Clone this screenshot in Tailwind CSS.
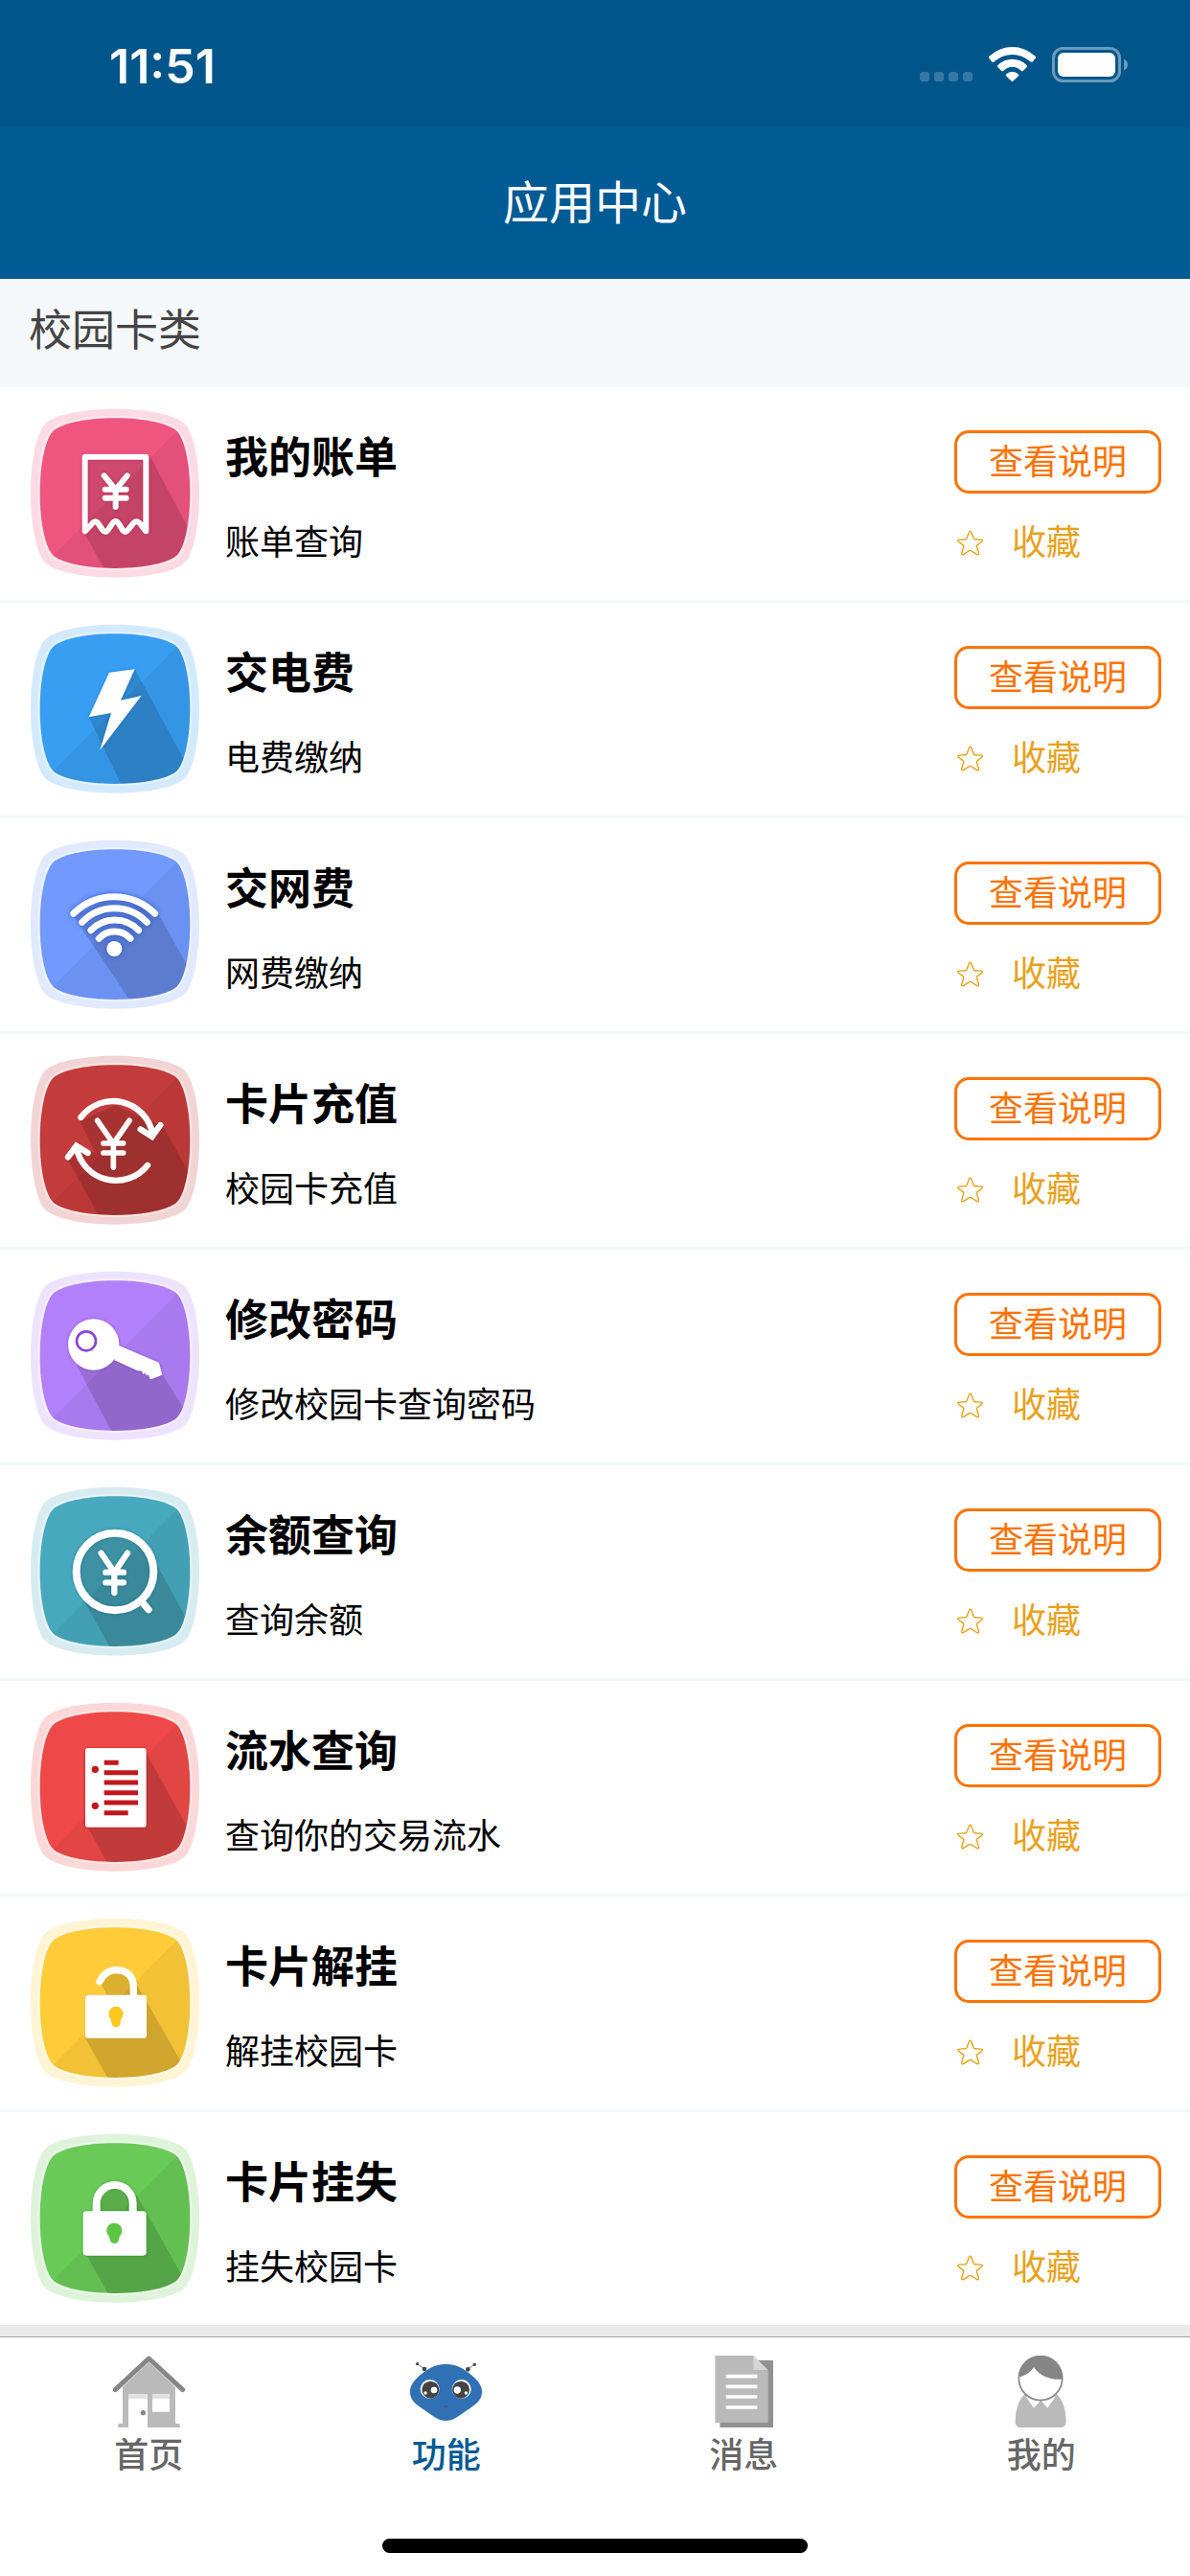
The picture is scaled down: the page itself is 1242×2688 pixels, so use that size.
<!DOCTYPE html>
<html lang="zh-CN">
<head>
    <meta charset="UTF-8">
    <meta name="viewport" content="width=device-width,initial-scale=1">
    <title>应用中心</title>
    <script src="https://cdn.jsdelivr.net/npm/@tailwindcss/browser@4"></script>
</head>
<body class="bg-[#eaeaea] min-h-screen flex flex-col font-['Inter','Noto_Sans_CJK_SC',sans-serif] text-black">
    <!-- 公用图形 -->
    <svg class="absolute w-0 h-0" aria-hidden="true">
        <defs>
            <path id="squircle" d="M0 -264C110 -264 193 -243 218 -218C243 -193 264 -110 264 0C264 110 243 193 218 218C193 243 110 264 0 264C-110 264 -193 243 -218 218C-243 193 -264 110 -264 0C-264 -110 -243 -193 -218 -218C-193 -243 -110 -264 0 -264Z"/>
            <clipPath id="inner"><use href="#squircle" transform="translate(270 269) scale(.89)"/></clipPath>
            <g id="tile">
                <use href="#squircle" transform="translate(270 269)" opacity=".22"/>
                <use href="#squircle" transform="translate(270 269) scale(.9)" fill="none" stroke="#fff" stroke-opacity=".4" stroke-width="9"/>
                <use href="#squircle" transform="translate(270 269) scale(.89)"/>
                <path d="M0 540L540 -2V540Z" fill="#000" fill-opacity=".05" clip-path="url(#inner)"/>
            </g>
            <symbol id="star" viewBox="0 0 27 27">
                <path d="M13.5 1.2c.6 0 1 .5 1.300 1.300l2.500 6.500c.2.500.5.700 1 .7l6.400.4c1.700.1 2.100 1.100.9 2.100l-4.700 3.700c-.5.400-.6.800-.5 1.400l2 6.600c.5 1.800-.5 2.500-2 1.500l-5.900-3.700c-.6-.4-1.200-.4-1.800 0l-5.900 3.700c-1.500 1-2.500.3-2-1.500l2-6.600c.1-.6 0-1-.5-1.400l-4.700-3.700c-1.200-1-.8-2 .9-2.100l6.400-.4c.5 0 .8-.2 1-.7l2.500-6.500c.3-.8.5-1.300 1.100-1.300z" fill="none" stroke="currentColor" stroke-width="1.400"/>
            </symbol>
        </defs>
    </svg>

    <header class="bg-[#005a93] text-white">
        <div class="bg-[#00568b] h-[132px] flex items-start justify-between pl-[114px] pr-[65px] pt-[49px]">
            <span class="text-[50px] leading-10 font-semibold">11:51</span>
            <div class="flex items-start gap-[17px]">
                <svg class="w-[55px] h-[37px]" viewBox="0 0 55 37" fill="#3578a3">
                    <rect x="0" y="26" width="10" height="10" rx="3"/>
                    <rect x="15" y="26" width="10" height="10" rx="3"/>
                    <rect x="30" y="26" width="10" height="10" rx="3"/>
                    <rect x="45" y="26" width="10" height="10" rx="3"/>
                </svg>
                <svg class="w-[49px] h-[37px]" viewBox="0 0 147 111" fill="#fff">
                    <path d="M1 35Q-2 32 1 29Q34 0 73.500 0T146 29Q149 32 146 35L138 46Q134 50 130 46Q104 24 73.500 24T17 46Q13 50 9 46Z"/>
                    <path d="M28 63Q25 60 28 57Q48 38 73.500 38T119 57Q122 60 119 63L108 74Q105 77 101 74Q88 62 73.500 62T46 74Q42 77 39 74Z"/>
                    <path d="M54 91Q51 88 55 85Q63 77 73.500 77T92 85Q96 88 93 91L77 106Q73.500 110 70 106Z"/>
                </svg>
                <svg class="w-[79px] h-[37px]" viewBox="0 0 79 37">
                    <rect x="1.500" y="1.500" width="69" height="34" rx="10" fill="none" stroke="#6a9bbd" stroke-width="3"/>
                    <rect x="6" y="6" width="60" height="25" rx="6" fill="#fff"/>
                    <path d="M75 12.500q4 2 4 6t-4 6z" fill="#6a9bbd"/>
                </svg>
            </div>
        </div>
        <h1 class="h-[159px] flex items-center justify-center text-[48px] font-normal">应用中心</h1>
    </header>

    <main class="bg-white">
        <h2 class="bg-[#f4f8fb] h-[113px] px-[30px] pt-[22px] text-[45px] leading-16 text-[#444]">校园卡类</h2>

        <ul class="divide-y-3 divide-[#f3f7fa]">
            <li class="flex items-start px-[30px] py-[21px] gap-[25px]">
                <svg class="w-[180px] h-[180px] shrink-0" viewBox="0 0 540 540">
                    <use href="#tile" fill="#f05580"/>
                    <path d="M175 155L378 150L628 620H300L175 395Z" fill-opacity=".14" clip-path="url(#inner)"/>
                    <g class="drop-shadow-[0_0_4px_#b8003c80]" fill="none" stroke="#fff" stroke-width="18" stroke-linecap="round" stroke-linejoin="round">
                        <path d="M176 388V155H367V388L353 370Q337 345 322 370L309 386Q302 393 295 386L284 368Q272 346 259 368L247 386Q239 393 231 384L219 366Q209 350 197 366Z"/>
                        <path d="M236 214L272 258L308 214M272 258V312M239 257H305M239 284H305"/>
                    </g>
                </svg>
                <div class="flex-1 flex flex-col gap-10 pt-[29px]">
                    <h3 class="text-[45px] leading-12 font-semibold">我的账单</h3>
                    <p class="text-[36px] leading-12">账单查询</p>
                </div>
                <div class="w-[216px] flex flex-col items-start gap-[27px] pt-6">
                    <button class="w-full h-[66px] rounded-[15px] border-3 border-[#ff7300] text-[#ff7300] text-[36px] leading-12">查看说明</button>
                    <button class="flex items-center gap-[30px] pl-[3px] text-[#e8a11c] text-[36px] leading-12"><svg class="w-[27px] h-[27px]"><use href="#star"/></svg>收藏</button>
                </div>
            </li>
            <li class="flex items-start px-[30px] py-[21px] gap-[25px]">
                <svg class="w-[180px] h-[180px] shrink-0" viewBox="0 0 540 540">
                    <use href="#tile" fill="#389ef2"/>
                    <path d="M332 145L575 590L335 600L188 295Z" fill-opacity=".14" clip-path="url(#inner)"/>
                    <path class="drop-shadow-[0_0_4px_#0060b080]" fill="#fff" d="M252 155L332 145L288 242L353 228L223 398L258 282L188 295Z"/>
                </svg>
                <div class="flex-1 flex flex-col gap-10 pt-[29px]">
                    <h3 class="text-[45px] leading-12 font-semibold">交电费</h3>
                    <p class="text-[36px] leading-12">电费缴纳</p>
                </div>
                <div class="w-[216px] flex flex-col items-start gap-[27px] pt-6">
                    <button class="w-full h-[66px] rounded-[15px] border-3 border-[#ff7300] text-[#ff7300] text-[36px] leading-12">查看说明</button>
                    <button class="flex items-center gap-[30px] pl-[3px] text-[#e8a11c] text-[36px] leading-12"><svg class="w-[27px] h-[27px]"><use href="#star"/></svg>收藏</button>
                </div>
            </li>
            <li class="flex items-start px-[30px] py-[21px] gap-[25px]">
                <svg class="w-[180px] h-[180px] shrink-0" viewBox="0 0 540 540">
                    <use href="#tile" fill="#7199ff"/>
                    <path d="M140 243L268 175L405 235L610 600L393 620Z" fill-opacity=".14" clip-path="url(#inner)"/>
                    <g class="drop-shadow-[0_0_8px_#1040c0b0]" fill="none" stroke="#fff" stroke-width="21" stroke-linecap="round">
                        <path d="M140 235A180 180 0 0 1 395 235M167 262A139 139 0 0 1 370 262M195 287A103 103 0 0 1 344 287M220 313A66 66 0 0 1 318 313"/>
                        <circle cx="268" cy="345" r="24" fill="#fff" stroke="none"/>
                    </g>
                </svg>
                <div class="flex-1 flex flex-col gap-10 pt-[29px]">
                    <h3 class="text-[45px] leading-12 font-semibold">交网费</h3>
                    <p class="text-[36px] leading-12">网费缴纳</p>
                </div>
                <div class="w-[216px] flex flex-col items-start gap-[27px] pt-6">
                    <button class="w-full h-[66px] rounded-[15px] border-3 border-[#ff7300] text-[#ff7300] text-[36px] leading-12">查看说明</button>
                    <button class="flex items-center gap-[30px] pl-[3px] text-[#e8a11c] text-[36px] leading-12"><svg class="w-[27px] h-[27px]"><use href="#star"/></svg>收藏</button>
                </div>
            </li>
            <li class="flex items-start px-[30px] py-[21px] gap-[25px]">
                <svg class="w-[180px] h-[180px] shrink-0" viewBox="0 0 540 540">
                    <use href="#tile" fill="#c43b3b"/>
                    <path d="M160 210L270 160L420 225L630 600L282 620L122 330L150 290L208 308Z" fill-opacity=".14" clip-path="url(#inner)"/>
                    <g fill="none" stroke="#fff" stroke-width="19" stroke-linecap="round" stroke-linejoin="round">
                        <path d="M163 198A126 126 0 0 1 388 250M372 348A126 126 0 0 1 150 295"/>
                        <path d="M350 235L386 258L412 222M123 322L149 287L185 309" stroke-linejoin="miter"/>
                        <path d="M215 208L265 280L315 208M265 280V354M234 279H296M234 309H296" stroke-width="17"/>
                    </g>
                </svg>
                <div class="flex-1 flex flex-col gap-10 pt-[29px]">
                    <h3 class="text-[45px] leading-12 font-semibold">卡片充值</h3>
                    <p class="text-[36px] leading-12">校园卡充值</p>
                </div>
                <div class="w-[216px] flex flex-col items-start gap-[27px] pt-6">
                    <button class="w-full h-[66px] rounded-[15px] border-3 border-[#ff7300] text-[#ff7300] text-[36px] leading-12">查看说明</button>
                    <button class="flex items-center gap-[30px] pl-[3px] text-[#e8a11c] text-[36px] leading-12"><svg class="w-[27px] h-[27px]"><use href="#star"/></svg>收藏</button>
                </div>
            </li>
            <li class="flex items-start px-[30px] py-[21px] gap-[25px]">
                <svg class="w-[180px] h-[180px] shrink-0" viewBox="0 0 540 540">
                    <use href="#tile" fill="#b380fb"/>
                    <path d="M150 300L268 270L340 310L420 330L590 600L315 610Z" fill-opacity=".14" clip-path="url(#inner)"/>
                    <g class="drop-shadow-[0_0_4px_#6020b080]" fill="#fff">
                        <circle cx="203" cy="234" r="80"/>
                        <path d="M282 237L404 289Q408 291 409 295L418 329L383 343Q378 342 376 330L368 331L366 324L358 327L354 317L340 316L268 283Z"/>
                    </g>
                    <circle cx="180" cy="223" r="30" fill="none" stroke="#8848d0" stroke-width="8"/>
                </svg>
                <div class="flex-1 flex flex-col gap-10 pt-[29px]">
                    <h3 class="text-[45px] leading-12 font-semibold">修改密码</h3>
                    <p class="text-[36px] leading-12">修改校园卡查询密码</p>
                </div>
                <div class="w-[216px] flex flex-col items-start gap-[27px] pt-6">
                    <button class="w-full h-[66px] rounded-[15px] border-3 border-[#ff7300] text-[#ff7300] text-[36px] leading-12">查看说明</button>
                    <button class="flex items-center gap-[30px] pl-[3px] text-[#e8a11c] text-[36px] leading-12"><svg class="w-[27px] h-[27px]"><use href="#star"/></svg>收藏</button>
                </div>
            </li>
            <li class="flex items-start px-[30px] py-[21px] gap-[25px]">
                <svg class="w-[180px] h-[180px] shrink-0" viewBox="0 0 540 540">
                    <use href="#tile" fill="#47a9be"/>
                    <path d="M149 270A121 121 0 0 1 387 240L402 250L600 610L312 610L175 365Z" fill-opacity=".14" clip-path="url(#inner)"/>
                    <g class="drop-shadow-[0_0_4px_#00507080]" fill="none" stroke="#fff" stroke-linecap="round" stroke-linejoin="round">
                        <circle cx="270" cy="270" r="121" stroke-width="24"/>
                        <path d="M352 362L375 389" stroke-width="22"/>
                        <path d="M227 212L268 272L309 212M268 272V336M241 272H297M241 304H297" stroke-width="19"/>
                    </g>
                </svg>
                <div class="flex-1 flex flex-col gap-10 pt-[29px]">
                    <h3 class="text-[45px] leading-12 font-semibold">余额查询</h3>
                    <p class="text-[36px] leading-12">查询余额</p>
                </div>
                <div class="w-[216px] flex flex-col items-start gap-[27px] pt-6">
                    <button class="w-full h-[66px] rounded-[15px] border-3 border-[#ff7300] text-[#ff7300] text-[36px] leading-12">查看说明</button>
                    <button class="flex items-center gap-[30px] pl-[3px] text-[#e8a11c] text-[36px] leading-12"><svg class="w-[27px] h-[27px]"><use href="#star"/></svg>收藏</button>
                </div>
            </li>
            <li class="flex items-start px-[30px] py-[21px] gap-[25px]">
                <svg class="w-[180px] h-[180px] shrink-0" viewBox="0 0 540 540">
                    <use href="#tile" fill="#ee4948"/>
                    <path d="M366 160L610 600L308 620L185 395Z" fill-opacity=".14" clip-path="url(#inner)"/>
                    <rect class="drop-shadow-[0_0_5px_#c00000b0]" x="177" y="147" width="191" height="248" rx="8" fill="#fff"/>
                    <path d="M236 193H281M236 224H342M236 255H342M236 287H342M236 318H342M236 350H311" stroke="#c1171d" stroke-width="15"/>
                    <circle cx="208" cy="214" r="11" fill="#c1171d"/>
                    <circle cx="208" cy="328" r="11" fill="#c1171d"/>
                </svg>
                <div class="flex-1 flex flex-col gap-10 pt-[29px]">
                    <h3 class="text-[45px] leading-12 font-semibold">流水查询</h3>
                    <p class="text-[36px] leading-12">查询你的交易流水</p>
                </div>
                <div class="w-[216px] flex flex-col items-start gap-[27px] pt-6">
                    <button class="w-full h-[66px] rounded-[15px] border-3 border-[#ff7300] text-[#ff7300] text-[36px] leading-12">查看说明</button>
                    <button class="flex items-center gap-[30px] pl-[3px] text-[#e8a11c] text-[36px] leading-12"><svg class="w-[27px] h-[27px]"><use href="#star"/></svg>收藏</button>
                </div>
            </li>
            <li class="flex items-start px-[30px] py-[21px] gap-[25px]">
                <svg class="w-[180px] h-[180px] shrink-0" viewBox="0 0 540 540">
                    <use href="#tile" fill="#ffcc39"/>
                    <path d="M222 205L270 165L320 190L340 215L560 600L312 620L177 380V245H245Z" fill-opacity=".14" clip-path="url(#inner)"/>
                    <rect x="177" y="245" width="192" height="135" rx="8" fill="#fff"/>
                    <path d="M222 203Q240 167 275 167Q328 170 328 222V250" fill="none" stroke="#fff" stroke-width="22" stroke-linecap="round"/>
                    <path d="M273 281A23 23 0 0 1 289 320L287 332A14 14 0 0 1 259 332L257 320A23 23 0 0 1 273 281Z" fill="#ffc81e"/>
                </svg>
                <div class="flex-1 flex flex-col gap-10 pt-[29px]">
                    <h3 class="text-[45px] leading-12 font-semibold">卡片解挂</h3>
                    <p class="text-[36px] leading-12">解挂校园卡</p>
                </div>
                <div class="w-[216px] flex flex-col items-start gap-[27px] pt-6">
                    <button class="w-full h-[66px] rounded-[15px] border-3 border-[#ff7300] text-[#ff7300] text-[36px] leading-12">查看说明</button>
                    <button class="flex items-center gap-[30px] pl-[3px] text-[#e8a11c] text-[36px] leading-12"><svg class="w-[27px] h-[27px]"><use href="#star"/></svg>收藏</button>
                </div>
            </li>
            <li class="flex items-start px-[30px] py-[21px] gap-[25px]">
                <svg class="w-[180px] h-[180px] shrink-0" viewBox="0 0 540 540">
                    <use href="#tile" fill="#6aca58"/>
                    <path d="M212 222L270 165L320 185L340 200L565 600L312 620L182 386L205 245Z" fill-opacity=".14" clip-path="url(#inner)"/>
                    <g class="drop-shadow-[0_0_4px_#10800080]">
                        <rect x="170" y="247" width="198" height="139" rx="10" fill="#fff"/>
                        <path d="M212 252V222A57 57 0 0 1 326 222V252" fill="none" stroke="#fff" stroke-width="24"/>
                    </g>
                    <path d="M268 284A24 24 0 0 1 285 325L282 334A14 14 0 0 1 254 334L251 325A24 24 0 0 1 268 284Z" fill="#5cc644"/>
                </svg>
                <div class="flex-1 flex flex-col gap-10 pt-[29px]">
                    <h3 class="text-[45px] leading-12 font-semibold">卡片挂失</h3>
                    <p class="text-[36px] leading-12">挂失校园卡</p>
                </div>
                <div class="w-[216px] flex flex-col items-start gap-[27px] pt-6">
                    <button class="w-full h-[66px] rounded-[15px] border-3 border-[#ff7300] text-[#ff7300] text-[36px] leading-12">查看说明</button>
                    <button class="flex items-center gap-[30px] pl-[3px] text-[#e8a11c] text-[36px] leading-12"><svg class="w-[27px] h-[27px]"><use href="#star"/></svg>收藏</button>
                </div>
            </li>
        </ul>
    </main>

    <!-- 底部导航 -->
    <footer class="mt-auto bg-white border-t border-[#a0a0a0] pt-[19px] pb-6">
        <nav class="flex text-[36px] leading-12 font-medium text-[#666]">
            <a href="#" class="flex-1 flex flex-col items-center gap-[5px]">
                <svg class="w-[75px] h-[75px]" viewBox="0 0 225 225">
                    <path d="M30 98L112 20L195 98V213H205Q210 214 210 225H15Q15 214 20 213H30Z" fill="#bababa"/>
                    <path d="M48 120H108V225H48ZM123 120H177V176H123Z" fill="#fff"/>
                    <path d="M48 120H108V135H48ZM123 120H177V135H123Z" fill="#e2e2e2"/>
                    <circle cx="94" cy="179" r="8" fill="#868686"/>
                    <path d="M7 107L112 9L218 107" fill="none" stroke="#868686" stroke-width="15" stroke-linecap="round" stroke-linejoin="round"/>
                </svg>
                首页
            </a>
            <a href="#" class="flex-1 flex flex-col items-center gap-[5px] text-[#005a93]">
                <svg class="w-[75px] h-[75px]" viewBox="0 0 225 225">
                    <path d="M23 26L46 43M202 27L180 44" stroke="#777" stroke-width="3"/>
                    <g fill="#444">
                        <circle cx="23" cy="26" r="5"/><circle cx="45" cy="42" r="7"/>
                        <circle cx="202" cy="28" r="5"/><circle cx="181" cy="43" r="7"/>
                    </g>
                    <path d="M112 27C150 27 175 45 202 70C219 86 225 100 225 112C225 130 219 142 200 156C178 172 160 184 143 195C125 207 99 207 81 195C64 184 46 172 24 156C6 142 0 130 0 112C0 100 6 86 22 70C49 45 74 27 112 27Z" fill="#3070b5"/>
                    <circle cx="62" cy="105" r="30" fill="#fff"/><circle cx="161" cy="105" r="30" fill="#fff"/>
                    <circle cx="64" cy="107" r="27" fill="#444"/><circle cx="159" cy="107" r="27" fill="#444"/>
                    <circle cx="75" cy="108" r="10" fill="#fff"/><circle cx="148" cy="108" r="11" fill="#fff"/>
                    <circle cx="48" cy="117" r="5" fill="#fff"/><circle cx="175" cy="117" r="5" fill="#fff"/>
                    <ellipse cx="113" cy="160" rx="7" ry="4" fill="#445c80"/>
                </svg>
                功能
            </a>
            <a href="#" class="flex-1 flex flex-col items-center gap-[5px]">
                <svg class="w-[75px] h-[75px]" viewBox="0 0 225 225">
                    <path d="M37 15H204V225H37Z" fill="#919191"/>
                    <path d="M22 0H142L188 45V210H22Z" fill="#bababa"/>
                    <path d="M142 0L187 45H142Z" fill="#d6d6d6"/>
                    <path d="M56 65H154M56 97H154M56 129H154M56 162H154" stroke="#fff" stroke-width="11"/>
                </svg>
                消息
            </a>
            <a href="#" class="flex-1 flex flex-col items-center gap-[5px]">
                <svg class="w-[75px] h-[75px]" viewBox="0 0 225 225">
                    <path d="M62 120L160 120C180 135 191 170 191 208Q190 222 178 225H45Q33 222 32 208C32 170 44 135 62 120Z" fill="#bababa"/>
                    <path d="M65 128L90 164L112 140L133 164L158 128Z" fill="#fff"/>
                    <ellipse cx="111" cy="71" rx="68" ry="69" fill="#fff" stroke="#868686" stroke-width="5"/>
                    <path d="M44 67C44 30 72 0 111 0C150 0 181 30 181 74C150 77 110 68 90 36C80 52 65 62 44 67Z" fill="#868686"/>
                </svg>
                我的
            </a>
        </nav>
        <div class="w-[444px] h-[15px] rounded-full bg-black mx-auto mt-[63px]"></div>
    </footer>
</body>
</html>
